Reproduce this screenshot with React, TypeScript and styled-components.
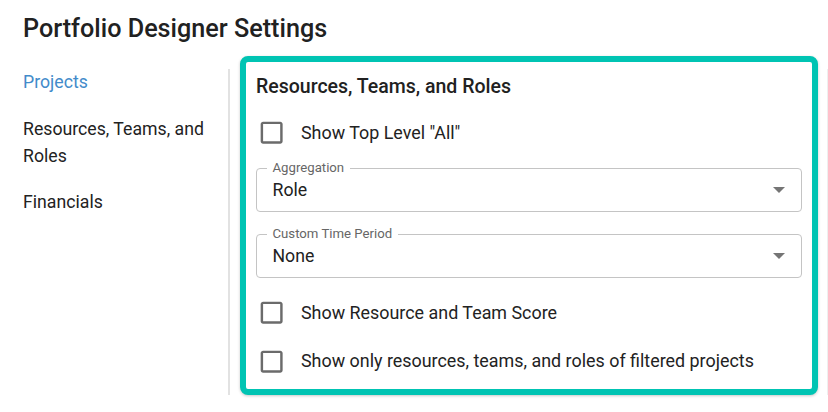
import React from "react";
import styled, { createGlobalStyle } from "styled-components";

const GlobalStyle = createGlobalStyle`
  html, body {
    margin: 0;
    padding: 0;
    background: #ffffff;
    overflow: hidden;
  }
  body {
    font-family: Roboto, "Noto Sans", "Liberation Sans", sans-serif;
    color: #212121;
  }
  * { box-sizing: border-box; }
`;

const Page = styled.div`
  min-height: 100vh;
  padding: 14px 0 0 23px;
  display: flex;
  flex-direction: column;
`;

const Title = styled.h1`
  margin: 0 0 12.6px;
  font-size: 25.2px;
  line-height: 29.4px;
  font-weight: 500;
  color: #212121;
`;

const Body = styled.div`
  flex: 1;
  display: flex;
  align-items: stretch;
  padding-bottom: 20px;
`;

const Sidebar = styled.nav`
  flex: 0 0 205px;
  padding: 13.2px 12px 0 0;
  display: flex;
  flex-direction: column;
  gap: 20.5px;
`;

const NavItem = styled.div<{ $active?: boolean }>`
  font-size: 17.7px;
  line-height: 26.4px;
  color: ${(p) => (p.$active ? "#428bca" : "#222222")};
  cursor: pointer;
`;

const VLine = styled.div<{ $color: string; $width: number }>`
  flex: 0 0 ${(p) => p.$width}px;
  margin-top: 13px;
  background: ${(p) => p.$color};
`;

const Content = styled.div`
  flex: 0 0 578px;
  margin: 0 9px 0 10px;
  align-self: flex-start;
`;

const Card = styled.section`
  border: 6px solid #00c4b3;
  border-radius: 8px;
  background: #ffffff;
  box-shadow: 0 1px 3px rgba(0, 0, 0, 0.22);
  padding: 11.5px 10px 4px;
  display: flex;
  flex-direction: column;
`;

const CardTitle = styled.h2`
  margin: 0;
  font-size: 19.5px;
  line-height: 26.4px;
  font-weight: 500;
  color: #212121;
`;

const CheckRow = styled.label<{ $mt?: number }>`
  height: 48px;
  margin-top: ${(p) => p.$mt ?? 0}px;
  display: flex;
  align-items: center;
  cursor: pointer;
`;

const CheckIcon = styled.svg`
  width: 29.3px;
  height: 29.3px;
  margin-left: 1.3px;
  flex: 0 0 auto;
  fill: #6b6b6b;
`;

const CheckLabel = styled.span`
  margin-left: 14.4px;
  font-size: 17.9px;
  line-height: 26.4px;
  color: #222222;
`;

const SelectBox = styled.div<{ $mt: number }>`
  position: relative;
  height: 44.5px;
  margin-top: ${(p) => p.$mt}px;
  border: 1px solid #c4c4c4;
  border-radius: 4px;
  display: flex;
  align-items: center;
  padding: 0 16px 0 15.5px;
`;

const FloatLabel = styled.span`
  position: absolute;
  top: -8.5px;
  left: 10px;
  padding: 0 5.5px;
  background: #ffffff;
  font-size: 13.2px;
  line-height: 16px;
  color: #666666;
`;

const SelectValue = styled.span`
  flex: 1;
  font-size: 17.7px;
  line-height: 26.4px;
  color: #212121;
`;

const Arrow = styled.svg`
  width: 12px;
  height: 6px;
  fill: #757575;
`;

const Checkbox: React.FC<{ label: string; mt?: number }> = ({ label, mt }) => (
  <CheckRow $mt={mt}>
    <CheckIcon viewBox="0 0 24 24" aria-hidden="true">
      <path d="M19 5v14H5V5h14m0-2H5c-1.1 0-2 .9-2 2v14c0 1.1.9 2 2 2h14c1.1 0 2-.9 2-2V5c0-1.1-.9-2-2-2z" />
    </CheckIcon>
    <CheckLabel>{label}</CheckLabel>
  </CheckRow>
);

const Select: React.FC<{ label: string; value: string; mt: number }> = ({ label, value, mt }) => (
  <SelectBox $mt={mt}>
    <FloatLabel>{label}</FloatLabel>
    <SelectValue>{value}</SelectValue>
    <Arrow viewBox="0 0 12 6" aria-hidden="true">
      <polygon points="0,0 12,0 6,6" />
    </Arrow>
  </SelectBox>
);

export default function App() {
  return (
    <>
      <GlobalStyle />
      <Page>
        <Title>Portfolio Designer Settings</Title>
        <Body>
          <Sidebar>
            <NavItem $active>Projects</NavItem>
            <NavItem>Resources, Teams, and Roles</NavItem>
            <NavItem>Financials</NavItem>
          </Sidebar>
          <VLine $color="#e2e2e2" $width={2} />
          <Content>
            <Card>
              <CardTitle>Resources, Teams, and Roles</CardTitle>
              <Checkbox label={'Show Top Level "All"'} mt={9} />
              <Select label="Aggregation" value="Role" mt={11} />
              <Select label="Custom Time Period" value="None" mt={21.5} />
              <Checkbox label="Show Resource and Team Score" mt={10.5} />
              <Checkbox label="Show only resources, teams, and roles of filtered projects" mt={0.5} />
            </Card>
          </Content>
          <VLine $color="#efefef" $width={1} />
        </Body>
      </Page>
    </>
  );
}
